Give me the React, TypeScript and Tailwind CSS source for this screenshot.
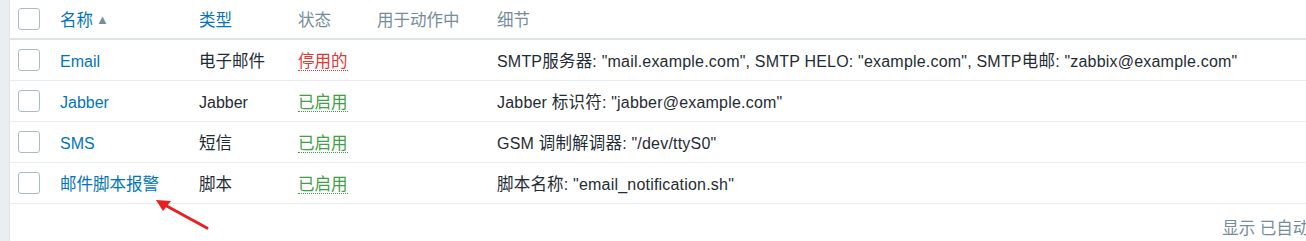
import React from "react";

type Row = {
  name: string;
  type: string;
  enabled: boolean;
  details: string;
};

const rows: Row[] = [
  {
    name: "Email",
    type: "电子邮件",
    enabled: false,
    details: 'SMTP服务器: "mail.example.com", SMTP HELO: "example.com", SMTP电邮: "zabbix@example.com"',
  },
  { name: "Jabber", type: "Jabber", enabled: true, details: 'Jabber 标识符: "jabber@example.com"' },
  { name: "SMS", type: "短信", enabled: true, details: 'GSM 调制解调器: "/dev/ttyS0"' },
  { name: "邮件脚本报警", type: "脚本", enabled: true, details: '脚本名称: "email_notification.sh"' },
];

const cols = "grid grid-cols-[42px_139px_99px_79px_120px_1fr] items-center";

// CJK glyphs in the original render a touch wider than Noto's, bump them slightly
function T({ children }: { children: string }) {
  const parts = children.split(/([\u3000-\u9fff\uff00-\uffef]+)/);
  return (
    <>
      {parts.map((p, i) =>
        /[\u3000-\u9fff\uff00-\uffef]/.test(p) ? (
          <span key={i} className="text-[16.5px]">
            {p}
          </span>
        ) : (
          <React.Fragment key={i}>{p}</React.Fragment>
        )
      )}
    </>
  );
}

function Checkbox() {
  return <div className="h-[22px] w-[22px] rounded-[3px] border border-[#acbbc2] bg-white" />;
}

export default function App() {
  return (
    <div
      className="relative flex h-[241px] w-full overflow-hidden bg-white text-[16px] text-[#1f2c33]"
      style={{ fontFamily: '"Liberation Sans", Arial, "Noto Sans CJK SC", sans-serif' }}
    >
      <div className="w-[10px] shrink-0 border-r border-[#dfe4e7] bg-[#ebeef0]" />

      <div className="flex min-w-0 flex-1 flex-col">
        <div className={`${cols} h-[40px] border-b-2 border-[#dfe4e7]`}>
          <div className="pl-2">
            <Checkbox />
          </div>
          <div className="flex items-center pl-2 pt-[2px] text-[#0275b8]">
            <T>名称</T>
            <span className="ml-[3px] text-[13px] text-[#768d99]">▲</span>
          </div>
          <div className="pl-2 pt-[2px] text-[#0275b8]">
            <T>类型</T>
          </div>
          <div className="pl-2 pt-[2px] text-[#768d99]">
            <T>状态</T>
          </div>
          <div className="pl-2 pt-[2px] text-[#768d99]">
            <T>用于动作中</T>
          </div>
          <div className="pl-2 pt-[2px] text-[#768d99]">
            <T>细节</T>
          </div>
        </div>

        {rows.map((r) => (
          <div key={r.name} className={`${cols} h-[41px] border-b border-[#ebeef0]`}>
            <div className="pl-2">
              <Checkbox />
            </div>
            <div className="pl-2 pt-[3px] text-[#0275b8]">
              <T>{r.name}</T>
            </div>
            <div className="pl-2 pt-[3px]">
              <T>{r.type}</T>
            </div>
            <div className="pl-2 pt-[3px]">
              <span
                className={
                  r.enabled
                    ? "border-b border-dotted border-[#429e47] text-[#429e47]"
                    : "border-b border-dotted border-[#e33734] text-[#e33734]"
                }
              >
                <T>{r.enabled ? "已启用" : "停用的"}</T>
              </span>
            </div>
            <div className="pl-2" />
            <div className="whitespace-nowrap pl-2 pt-[3px] tracking-[0.2px]">
              <T>{r.details}</T>
            </div>
          </div>
        ))}

        <div className="flex justify-end pt-[12px]">
          <div className="mr-[-108px] whitespace-nowrap text-[#768d99]">
            <T>显示 已自动发现的 4中的4</T>
          </div>
        </div>
      </div>

      <svg className="pointer-events-none absolute left-0 top-0" width="260" height="241">
        <line x1="207" y1="228" x2="163" y2="204" stroke="#e8201f" strokeWidth="3" strokeLinecap="round" />
        <polygon points="156,200 171,201 163,211" fill="#e8201f" />
      </svg>
    </div>
  );
}
